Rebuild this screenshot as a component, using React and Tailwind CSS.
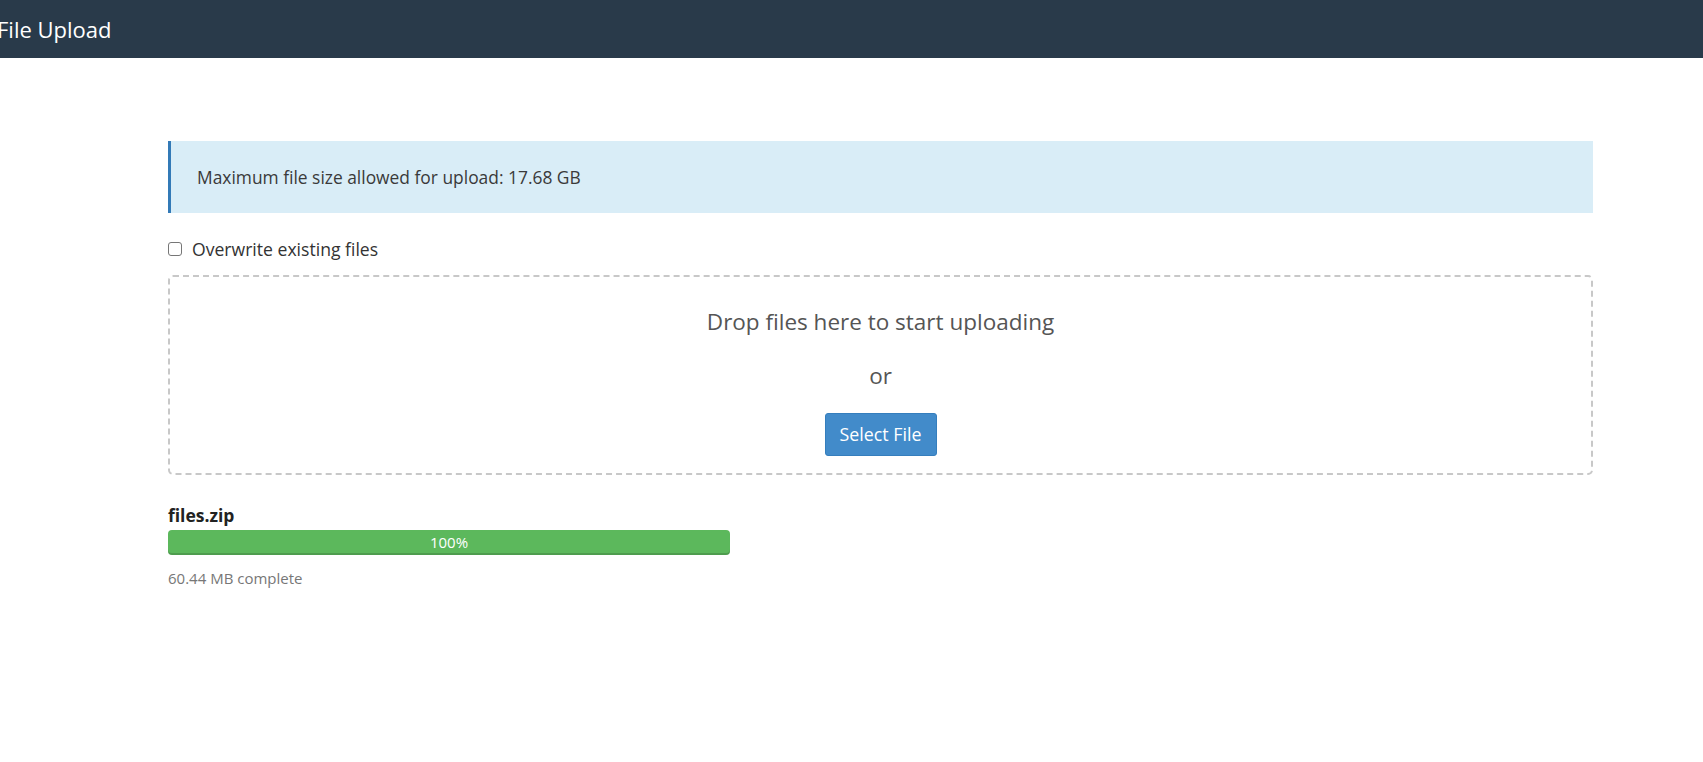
import React from "react";

export default function App() {
  return (
    <div className="min-h-[762px] bg-white font-['Open_Sans',sans-serif] text-[#333]">
      <header className="flex h-[58px] items-center overflow-hidden bg-[#293a4a]">
        <h1 className="-ml-[3px] text-[22px] leading-none text-white">File Upload</h1>
      </header>
      <main className="pl-[168px] pr-[110px] pt-[83px]">
        <div className="flex h-[72px] items-center border-l-[3px] border-[#337ab7] bg-[#d9edf7] pl-[26px] text-[17.4px] text-[#3a3a3a]">
          Maximum file size allowed for upload: 17.68 GB
        </div>
        <label className="mt-[25px] flex items-center gap-[10px] text-[17.6px] leading-[22px] text-[#333]">
          <span className="h-[14px] w-[14px] rounded-[3px] border border-[#767676] bg-white" />
          Overwrite existing files
        </label>
        <div className="mt-[15px] flex h-[200px] flex-col items-center rounded-[5px] border-2 border-dashed border-[#c8c8c8] pt-[30px]">
          <div className="text-[22.5px] leading-[30px] text-[#555]">Drop files here to start uploading</div>
          <div className="mt-[24px] text-[22.5px] leading-[30px] text-[#555]">or</div>
          <button className="mt-[22px] h-[43px] w-[112px] rounded-[3px] border border-[#357ebd] bg-[#428bca] text-[17.8px] text-white">
            Select File
          </button>
        </div>
        <div className="mt-[28px] text-[17.5px] font-bold leading-[24px] text-[#222]">files.zip</div>
        <div className="mt-[3px] flex h-[25px] w-[562px] items-center justify-center rounded-[4px] bg-[#5cb85c] text-[15px] text-white shadow-[inset_0_-2px_0_rgba(0,0,0,0.15)]">
          100%
        </div>
        <div className="mt-[13px] text-[15px] leading-[20px] text-[#777]">60.44 MB complete</div>
      </main>
    </div>
  );
}
